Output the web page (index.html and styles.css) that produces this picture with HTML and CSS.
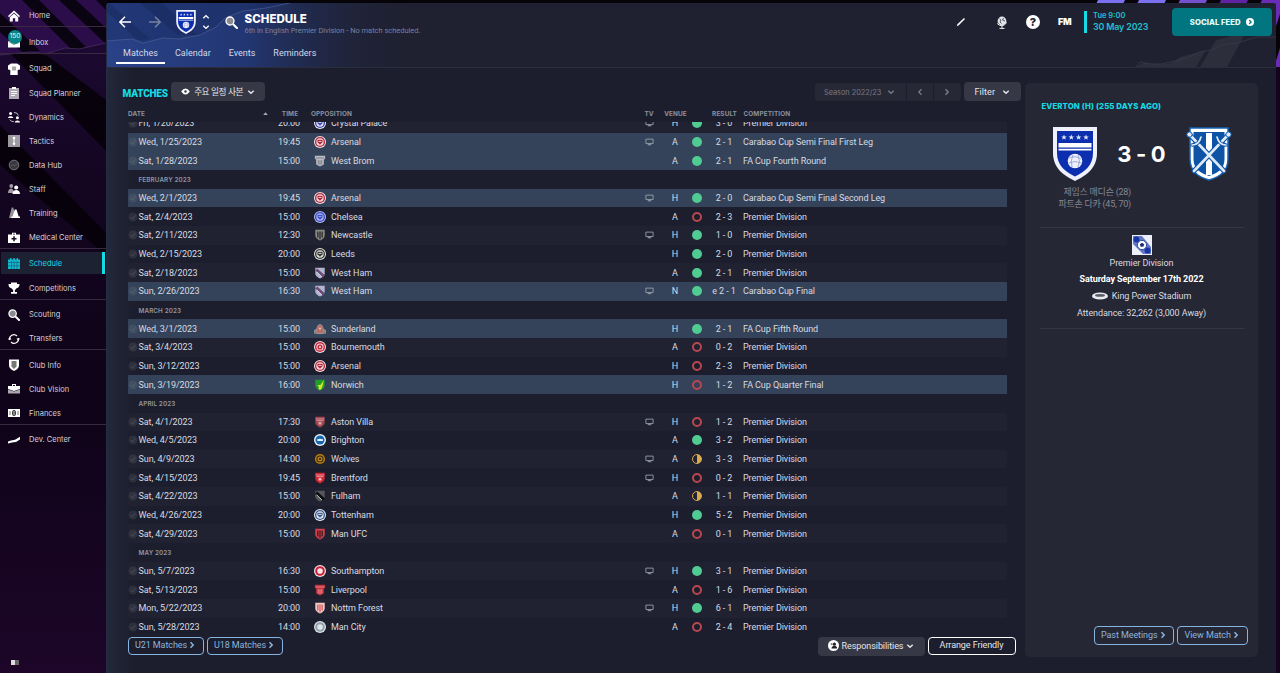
FILE: index.html
```html
<!DOCTYPE html>
<html lang="en">
<head>
    <meta charset="UTF-8">
    <meta name="viewport" content="width=device-width, initial-scale=1.0">
    <title>Schedule - Matches</title>
    <link rel="stylesheet" href="styles.css">
</head>
<body>
    <!-- icon sprite -->
    <svg class="sprite" aria-hidden="true">
        <symbol id="i-home" viewBox="0 0 12 12"><path d="M6 .4 0 6l1 1.200L6 2.600l5 4.600L12 6z"/><path d="M1.800 7.200V11.500h3V8.200h2.400v3.300h3V7.200L6 3.500z"/></symbol>
        <symbol id="i-inbox" viewBox="0 0 12 12"><path d="M0 5h12v6.500H0z"/><path d="M0 5l6 3.600L12 5" fill="none" stroke="#777" stroke-width=".8"/></symbol>
        <symbol id="i-shirt" viewBox="0 0 12 12"><path d="M3 .5h6l3 2V6.500l-2.300.5v5H2.300V7L0 6.500v-4z"/><path d="M5 3.500v4M7 3.500v4" stroke="#555" stroke-width="1"/></symbol>
        <symbol id="i-clip" viewBox="0 0 12 12"><path d="M1 1h10v11H1z" opacity=".65"/><path d="M4 0h4v2H4z"/><path d="M3 4.500h6M3 6.500h6M3 8.500h4" stroke="#fff" stroke-width=".9"/></symbol>
        <symbol id="i-dyn" viewBox="0 0 12 12"><circle cx="2.600" cy="2.500" r="1.500"/><path d="M0 7c0-2.500 5.200-2.500 5.200 0z"/><circle cx="9.400" cy="6.800" r="1.500"/><path d="M6.800 11.500c0-2.700 5.200-2.700 5.200 0z"/><path d="M6 1.500q4 0 4.300 3M1.800 8.500q1 2.300 4 2.200" fill="none" stroke="#bbb" stroke-width="1"/></symbol>
        <symbol id="i-tac" viewBox="0 0 12 12"><path d="M0 0h12v12H0z" opacity=".6"/><circle cx="6" cy="3" r="1.300"/><circle cx="6" cy="8.700" r="1.300"/><path d="M5.500 3h1v6h-1z"/></symbol>
        <symbol id="i-data" viewBox="0 0 12 12"><circle cx="6" cy="6" r="4.800" fill="#3a373e" stroke="#85828a" stroke-width=".8"/><path d="M2.500 7.500l2-2 2 1.500 3-3" fill="none" stroke="#67646c" stroke-width=".7"/></symbol>
        <symbol id="i-staff" viewBox="0 0 12 12"><g opacity=".6"><circle cx="3.300" cy="3" r="1.900"/><path d="M0 10c0-6 6-6 6 0z"/></g><circle cx="8.200" cy="4.500" r="2"/><path d="M4.500 11c0-5.500 7.500-5.500 7.500 0z"/></symbol>
        <symbol id="i-train" viewBox="0 0 12 12"><path d="M3.800.5h1.400L8.500 11H1z" opacity=".55"/><path d="M6.800 2.500h1.700l2.200 7H12V11H3.300V9.500h1.300z"/></symbol>
        <symbol id="i-med" viewBox="0 0 12 12"><path d="M4 2.500V.8h4v1.700h4V11H0V2.500zm1 0h2v-.8H5z"/><path d="M6 4.200v5M3.500 6.700h5" stroke="#150a1e" stroke-width="1.500"/></symbol>
        <symbol id="i-cal" viewBox="0 0 12 12"><path d="M2 0h1.500v1.500H2zM5.300 0h1.500v1.500H5.300zM8.600 0h1.500v1.500H8.600zM0 1.500h12V11H0z"/><path d="M0 4.500h12M0 7.800h12M3.500 3v8M6.200 3v8M9 3v8" stroke="#155a6c" stroke-width=".6"/></symbol>
        <symbol id="i-cup" viewBox="0 0 12 12"><path d="M3 .5h6V2h2.500c0 3-1 3.800-3 4.200C8 7.300 7 7.800 6.900 8v2H9v1.700H3V10h2.100V8C4.900 7.600 4 7.200 3.500 6.200 1.500 5.800.5 5 .5 2H3z"/></symbol>
        <symbol id="i-search" viewBox="0 0 12 12"><circle cx="4.600" cy="4.600" r="3.700" fill="#8a8a8f" stroke="#fff" stroke-width="1.200"/><path d="M8 8l3 3" stroke="#fff" stroke-width="2" stroke-linecap="round"/></symbol>
        <symbol id="i-trans" viewBox="0 0 12 12"><path d="M1.700 7A4.300 4.300 0 0 1 9 3M10.300 5A4.300 4.300 0 0 1 3 9" fill="none" stroke="#fff" stroke-width="1.200"/><path d="M0 6.500h3.500L1.700 4zM12 5.500H8.500L10.300 8z"/></symbol>
        <symbol id="i-shield" viewBox="0 0 12 12"><path d="M1 .5h10v5.300C11 9.500 8.500 11 6 12 3.500 11 1 9.500 1 5.800z"/><path d="M3.500 2h5v5.500L6 10 3.500 7.500z" fill="#777"/></symbol>
        <symbol id="i-case" viewBox="0 0 12 12"><path d="M4 3V1h4v2h4v3L6 8 0 6V3zm1-1v1h2V2z"/><path d="M0 6.500l6 2 6-2v4H0z" opacity=".65"/></symbol>
        <symbol id="i-fin" viewBox="0 0 12 12"><path d="M0 2h12v8H0z"/><path d="M2 4v4M10 4v4" stroke="#777"/><ellipse cx="6" cy="6" rx="2" ry="3" fill="#333"/><path d="M6 4v4" stroke="#fff" stroke-width=".8"/></symbol>
        <symbol id="i-dev" viewBox="0 0 12 12"><path d="M0 7.500l3-1 4-.7 5-3v2.700L8 8l-4 .5L0 9.500z"/></symbol>
        <symbol id="i-down" viewBox="0 0 8 8"><path d="M1.300 2.700 4 5.200l2.700-2.500" fill="none" stroke="currentColor" stroke-width="1.500"/></symbol>
        <symbol id="i-right" viewBox="0 0 8 8"><path d="M2.500 1.200 5.200 4 2.500 6.800" fill="none" stroke="currentColor" stroke-width="1.500"/></symbol>
        <symbol id="i-left" viewBox="0 0 8 8"><path d="M5.500 1.200 2.800 4l2.700 2.800" fill="none" stroke="currentColor" stroke-width="1.300"/></symbol>
        <symbol id="i-tv" viewBox="0 0 10 8"><path d="M1 .8h8v4.900H1z" fill="none" stroke="#a3a8b2" stroke-width=".9"/><path d="M3 6.500h4v1H3z" fill="#a3a8b2"/></symbol>
        <symbol id="i-check" viewBox="0 0 10 10"><circle cx="5" cy="5" r="4.500" fill="#8a8a90" opacity=".17"/><path d="M2.800 5.200l1.600 1.600L7.500 3.300" fill="none" stroke="#8a8a90" stroke-width=".9" opacity=".35"/></symbol>
        <symbol id="crest" viewBox="0 0 44 54">
            <path d="M0 0h44v26c0 16-12 23-22 28C12 49 0 42 0 26z" fill="#eef0fb"/>
            <path d="M4 4h36v22c0 13-9 19-18 23.500C13 45 4 39 4 26z" fill="#0b2fae"/>
            <path d="M5.500 16h33v4.500h-33zM5.500 21.800h33v1.800h-33z" fill="#fff"/>
            <g fill="#dfe4fb"><path id="star" d="M11 7.500l.8 2h2l-1.600 1.300.6 2-1.800-1.200-1.800 1.200.6-2-1.600-1.300h2z"/><use href="#star" x="7.300"/><use href="#star" x="14.600"/><use href="#star" x="22"/></g>
            <circle cx="22" cy="34" r="7.300" fill="#eef0fb"/>
            <path d="M16 31q6-3 12 1M15.500 36q7-3 13 0M19 40q-2-6 1-12M25 40q3-5 0-12" fill="none" stroke="#8a99d8" stroke-width=".8"/>
        </symbol>
    </svg>

    <div class="app">
        <!-- purple stripes behind the panel edges -->
        <svg class="backdrop" viewBox="0 0 200 673">
            <path d="M200 67v606h-6V67z" fill="#16041f"/>
            <path d="M18 0h27l-2 4H16zM59 0h27l-2 4H57z" fill="#7b70f0"/>
            <path d="M100 0h27l-2 4H98z" fill="#7550cd"/>
            <path d="M141 0h27l-2 4h-27z" fill="#5f22a3"/>
            <path d="M182 0h18v14l-6 18V4h-14zM200 48v19h-6z" fill="#6a2bb8"/>
        </svg>

        <aside class="sidebar">
            <svg class="sidebar-art" viewBox="0 0 106 673" preserveAspectRatio="none">
                <defs><linearGradient id="side" x2="0" y2="1"><stop offset="0" stop-color="#1f0a36"/><stop offset=".3" stop-color="#13051f"/><stop offset=".6" stop-color="#0e0318"/><stop offset="1" stop-color="#1d0629"/></linearGradient></defs>
                <path d="M0 0h106v673H0z" fill="url(#side)"/>
                <path d="M0 0h106v43l-27 6-14-1-20 6-15-2-30 3z" fill="#2b0d4a"/>
                <path d="M22 0h17l47 47-7 2-9-1zM0 13v19l22 20 18-1zM59 0h17l30 28v16zM96 0h10v10z" fill="#07020c" opacity=".9"/>
                <path d="M10 53l35 1 61 46v51zM0 125l106 108v22L0 165z" fill="#050108" opacity=".88"/>
                <path d="M0 55l30-3 15 2 20-6 14 1 27-6" fill="none" stroke="#4b3560" stroke-width=".7"/>
            </svg>
            <nav class="menu">
                <div class="menu-group">
                    <a class="item"><svg class="icon"><use href="#i-home"/></svg>Home</a>
                </div>
                <div class="menu-group">
                    <a class="item"><svg class="icon"><use href="#i-inbox"/></svg>Inbox<span class="badge">150</span></a>
                </div>
                <div class="menu-group">
                    <a class="item"><svg class="icon"><use href="#i-shirt"/></svg>Squad</a>
                    <a class="item"><svg class="icon"><use href="#i-clip"/></svg>Squad Planner</a>
                    <a class="item"><svg class="icon"><use href="#i-dyn"/></svg>Dynamics</a>
                    <a class="item"><svg class="icon"><use href="#i-tac"/></svg>Tactics</a>
                    <a class="item"><svg class="icon"><use href="#i-data"/></svg>Data Hub</a>
                    <a class="item"><svg class="icon"><use href="#i-staff"/></svg>Staff</a>
                    <a class="item"><svg class="icon"><use href="#i-train"/></svg>Training</a>
                    <a class="item"><svg class="icon"><use href="#i-med"/></svg>Medical Center</a>
                </div>
                <div class="menu-group">
                    <a class="item active"><svg class="icon"><use href="#i-cal"/></svg>Schedule</a>
                    <a class="item"><svg class="icon"><use href="#i-cup"/></svg>Competitions</a>
                </div>
                <div class="menu-group">
                    <a class="item"><svg class="icon"><use href="#i-search"/></svg>Scouting</a>
                    <a class="item"><svg class="icon"><use href="#i-trans"/></svg>Transfers</a>
                </div>
                <div class="menu-group">
                    <a class="item"><svg class="icon"><use href="#i-shield"/></svg>Club Info</a>
                    <a class="item"><svg class="icon"><use href="#i-case"/></svg>Club Vision</a>
                    <a class="item"><svg class="icon"><use href="#i-fin"/></svg>Finances</a>
                </div>
                <div class="menu-group last">
                    <a class="item"><svg class="icon"><use href="#i-dev"/></svg>Dev. Center</a>
                </div>
            </nav>
            <span class="toggle"></span>
        </aside>

        <div class="panel">
            <header class="topbar">
                <svg class="topbar-art" viewBox="0 0 1170 64">
                    <defs><linearGradient id="blue"><stop offset="0" stop-color="#2b4797"/><stop offset=".45" stop-color="#233a7f"/><stop offset="1" stop-color="#1f2133" stop-opacity="0"/></linearGradient></defs>
                    <path d="M0 0h310v64H0z" fill="url(#blue)" opacity=".85"/>
                    <path d="M0 38l26-2 11 4 20-5 17 1 20-4 16-8 9-9 18-7 23-3 24-5V0H0z" fill="#172a60" opacity=".4"/>
                    <path d="M0 8l32 29 12-1L3 0zM34 0h22l36 32H72z" fill="#14224f" opacity=".35"/>
                    <path d="M0 38l26-2 11 4 20-5 17 1 20-4 16-8 9-9 18-7 23-3 24-5" fill="none" stroke="#4c5e96" stroke-width=".7"/>
                    <path d="M1028 64l12-5 8 2 14 0 10-4-3 7zM1062 64l12-10 20-5 6-2-10 17zM1094 64l16-27 30-8-19 35z" fill="#2d2e3b"/>
                    <path d="M1030 64l4-5 8 2 14 0 25-6 12-6 13-2 10-5 15-2 20-6 19 0" fill="none" stroke="#383a47" stroke-width=".8"/>
                </svg>
                <div class="topbar-main">
                    <svg class="arrow" viewBox="0 0 12 12"><path d="M6 .8.900 6l5.100 5.200M1 6h11" fill="none" stroke="#fff" stroke-width="1.500"/></svg>
                    <svg class="arrow next" viewBox="0 0 12 12"><path d="M6 .8 11.100 6 6 11.200M11 6H0" fill="none" stroke="#77829f" stroke-width="1.500"/></svg>
                    <svg class="club-crest"><use href="#crest"/></svg>
                    <svg class="updown" viewBox="0 0 8 16"><path d="M1.300 4.200 4 1.600l2.700 2.600M1.300 11.800 4 14.400l2.700-2.600" fill="none" stroke="#fff" stroke-width="1.400"/></svg>
                    <svg class="search"><use href="#i-search"/></svg>
                    <div class="title">
                        <h1>SCHEDULE</h1>
                        <p>6th in English Premier Division - No match scheduled.</p>
                    </div>
                    <div class="tools">
                        <svg class="pencil" viewBox="0 0 10 10"><path d="M.8 9.200l.6-2L8 1l1 1-6.200 6.300z" fill="#fff"/></svg>
                        <svg class="globe" viewBox="0 0 12 13"><circle cx="6" cy="5" r="4.400" fill="#e2e3e8"/><path d="M3.500 3l1.500 1-1 2 1.500 1.500M7.500 2l-1 2 2.500 1" stroke="#4a4c5c" stroke-width=".9" fill="none"/><path d="M1.200 7.500Q6 12.500 10.800 6.500M6 10v2.500M3.500 12.400h5" stroke="#eee" fill="none"/></svg>
                        <span class="help">?</span>
                        <span class="fm">FM</span>
                        <div class="date"><span>Tue 9:00</span><strong>30 May 2023</strong></div>
                        <button class="social">SOCIAL FEED <svg viewBox="0 0 8 8"><circle cx="4" cy="4" r="4" fill="#fff"/><path d="M3.200 2 5.200 4l-2 2" fill="none" stroke="#027680" stroke-width="1.200"/></svg></button>
                    </div>
                </div>
                <nav class="tabs">
                    <a class="tab current">Matches</a>
                    <a class="tab">Calendar</a>
                    <a class="tab">Events</a>
                    <a class="tab">Reminders</a>
                </nav>
            </header>

            <div class="content">
                <main class="matches">
                    <div class="toolbar">
                        <h2>MATCHES</h2>
                        <button class="btn view"><svg class="eye" viewBox="0 0 10 8"><path d="M0 4q5-7 10 0-5 7-10 0z" fill="#fff"/><circle cx="5" cy="4" r="1.400" fill="#383a49"/></svg><span>주요 일정 사본</span><svg class="chev"><use href="#i-down"/></svg></button>
                        <div class="season">
                            <span class="season-name">Season 2022/23 <svg class="chev"><use href="#i-down"/></svg></span>
                            <span class="step"><svg class="chev"><use href="#i-left"/></svg></span>
                            <span class="step end"><svg class="chev"><use href="#i-right"/></svg></span>
                        </div>
                        <button class="btn filter">Filter <svg class="chev"><use href="#i-down"/></svg></button>
                    </div>
                    <div class="table-head">
                        <span>DATE</span>
                        <span class="sort"></span>
                        <span class="mid">TIME</span>
                        <span>OPPOSITION</span>
                        <span class="mid">TV</span>
                        <span class="mid">VENUE</span>
                        <span></span>
                        <span class="mid">RESULT</span>
                        <span>COMPETITION</span>
                    </div>
                    <div class="table-wrap">
                        <div class="rows" id="rows"></div>
                        <div class="scrollbar"></div>
                    </div>
                    <div class="actions">
                        <button class="btn-outline">U21 Matches <svg class="chev"><use href="#i-right"/></svg></button>
                        <button class="btn-outline">U18 Matches <svg class="chev"><use href="#i-right"/></svg></button>
                        <button class="btn resp"><svg class="who" viewBox="0 0 12 12"><circle cx="6" cy="6" r="6" fill="#fff"/><circle cx="7" cy="4.500" r="1.700" fill="#222"/><path d="M3.800 9.300c0-4 6.200-4 6.200 0z" fill="#222"/><circle cx="4" cy="4.500" r="1.200" fill="#888"/></svg>Responsibilities <svg class="chev"><use href="#i-down"/></svg></button>
                        <button class="btn-outline white">Arrange Friendly</button>
                    </div>
                </main>

                <section class="card">
                    <h3>EVERTON (H) (255 DAYS AGO)</h3>
                    <div class="score">
                        <svg class="crest-l"><use href="#crest"/></svg>
                        <span>3 - 0</span>
                        <svg class="crest-r" viewBox="0 0 46 54">
                            <path d="M4 1h38v31c0 13-9 18-19 21C13 50 4 45 4 32z" fill="#fff" stroke="#1565b8" stroke-width="1.500"/>
                            <path d="M7.500 5h31v27c0 10-7 14-15.500 17C14.500 46 7.500 42 7.500 32z" fill="#0d53a6"/>
                            <path d="M20 6h6v42h-6z" fill="#fff"/>
                            <g fill="none" stroke-linecap="round"><path d="M4 8l34 36M42 8 8 44" stroke="#0d53a6" stroke-width="5"/><path d="M4 8l34 36M42 8 8 44" stroke="#dfeaf7" stroke-width="2.600"/><path d="M6 18q7 0 9-8M40 18q-7 0-9-8" stroke="#0d53a6" stroke-width="3.500"/><path d="M6 18q7 0 9-8M40 18q-7 0-9-8" stroke="#dfeaf7" stroke-width="1.700"/></g>
                            <g fill="#dfeaf7" stroke="#1565b8"><circle cx="3.500" cy="7.500" r="2.600"/><circle cx="42.500" cy="7.500" r="2.600"/></g>
                        </svg>
                    </div>
                    <div class="scorers">
                        <p>제임스 매디슨 (28)</p>
                        <p>파트손 다카 (45, 70)</p>
                    </div>
                    <div class="info">
                        <svg class="comp" viewBox="0 0 20 20"><path d="M0 0h20v20H0z" fill="#edf0fa"/><path d="M1 1h9l9 11v7h-8L1 9z" fill="#6378c4"/><circle cx="4.500" cy="4.500" r="3" fill="#1736a5"/><circle cx="15.500" cy="15.500" r="3" fill="#1736a5"/><circle cx="10" cy="10" r="4.600" fill="#fff" stroke="#344f9f"/><path d="M10 7.800l2.200 1.500-.9 2.500H8.700l-.9-2.500z" fill="#1d2d70"/></svg>
                        <p class="league">Premier Division</p>
                        <p class="day">Saturday September 17th 2022</p>
                        <p class="ground"><svg viewBox="0 0 16 8"><ellipse cx="8" cy="4" rx="8" ry="3.600" fill="#e9eaee"/><ellipse cx="8" cy="3.400" rx="5" ry="1.300" fill="#5a5d67"/></svg>King Power Stadium</p>
                        <p class="crowd">Attendance: 32,262 (3,000 Away)</p>
                    </div>
                    <div class="card-actions">
                        <button class="btn-outline">Past Meetings <svg class="chev"><use href="#i-right"/></svg></button>
                        <button class="btn-outline">View Match <svg class="chev"><use href="#i-right"/></svg></button>
                    </div>
                </section>
            </div>
        </div>
    </div>

    <script src="script.js"></script>
</body>
</html>
```

FILE: styles.css
```css
:root {
    --cyan: #14dbe4;
    --panel: #1c1e2d;
    --card: #252735;
    --cup: #34435a;
    --text: #d9dbe1;
    --muted: #8d909b;
    --outline: #86b4e0;
    --row: 18.67px;
}

* {
    margin: 0;
    padding: 0;
    box-sizing: border-box;
}

body {
    width: 1280px;
    height: 673px;
    overflow: hidden;
    background: #060309;
    color: var(--text);
    font-family: Roboto, "Noto Sans CJK KR", sans-serif;
    font-size: 9px;
    letter-spacing: -0.08px;
}

button {
    font: inherit;
    letter-spacing: inherit;
    color: inherit;
    border: none;
    background: none;
}

svg {
    display: block;
    flex: none;
}

.sprite {
    position: absolute;
    width: 0;
    height: 0;
}

.app {
    position: relative;
    display: flex;
    height: 673px;
}

.backdrop {
    position: absolute;
    top: 0;
    right: 0;
    width: 200px;
    height: 673px;
}

/* Sidebar */
.sidebar {
    position: relative;
    width: 106px;
    padding-top: 3.4px;
    font-family: Inter, sans-serif;
    font-size: 7.5px;
    letter-spacing: 0;
}

.sidebar-art {
    position: absolute;
    inset: 0;
    width: 106px;
    height: 673px;
}

.menu {
    position: relative;
}

.menu-group {
    margin-bottom: 2.4px;
    box-shadow: 0 -1px 0 #38293f inset;
}

.menu-group.last {
    box-shadow: none;
}

.item {
    position: relative;
    display: flex;
    align-items: center;
    gap: 9px;
    height: 24.1px;
    padding: 1px 0 0 8px;
    color: #d5d2da;
}

.item.active {
    color: var(--cyan);
    background: linear-gradient(#1c2232, #1c2232) 1px 0 / 105px 22px no-repeat;
    border-right: 3px solid var(--cyan);
    border-image: linear-gradient(transparent 4%, var(--cyan) 4% 88%, transparent 88%) 1;
    margin-right: 1px;
    padding-top: 0;
}

.icon {
    width: 12px;
    height: 12px;
    fill: #fff;
}

.active .icon {
    fill: #13b5cf;
}

.badge {
    position: absolute;
    left: 8px;
    top: 0;
    width: 14px;
    height: 14px;
    border-radius: 50%;
    background: #078587;
    color: #e5ffff;
    font-size: 6.5px;
    line-height: 13px;
    text-align: center;
    letter-spacing: 0;
}

.toggle {
    position: absolute;
    left: 11px;
    bottom: 8px;
    width: 8px;
    height: 5px;
    background: linear-gradient(90deg, #ddd 50%, #666 50%);
}

/* Main panel */
.panel {
    position: relative;
    width: 1170px;
    height: 670px;
    margin-top: 3px;
    border-left: 1px solid #252c42;
    border-radius: 3px 3px 0 0;
    background: linear-gradient(90deg, #22293b, transparent 25px), var(--panel);
    overflow: hidden;
}

.topbar {
    position: relative;
    height: 65px;
    background: #1f2131;
    border-bottom: 1px solid #2a2d3b;
}

.topbar-art {
    position: absolute;
    left: -1px;
    top: 0;
    width: 1170px;
    height: 64px;
}

.topbar-main {
    position: relative;
    display: flex;
    align-items: center;
    height: 38px;
    padding-left: 12px;
}

.arrow {
    width: 12px;
    height: 12px;
}

.arrow.next {
    margin-left: 18px;
}

.club-crest {
    width: 20px;
    height: 24px;
    margin-left: 14.5px;
}

.updown {
    width: 8px;
    height: 16px;
    margin-left: 6px;
}

.search {
    width: 13px;
    height: 13px;
    margin-left: 15px;
}

.title {
    margin-left: 7px;
    padding-top: 3px;
}

.title h1 {
    font: 800 11.5px/14px Inter, sans-serif;
    letter-spacing: 0.05px;
    color: #fff;
}

.title p {
    font-size: 7.5px;
    line-height: 10px;
    letter-spacing: -0.03px;
    color: #7a80a0;
}

.tools {
    display: flex;
    align-items: center;
    margin-left: auto;
    padding-right: 4px;
}

.pencil {
    width: 10px;
    height: 10px;
    margin-right: 30px;
}

.globe {
    width: 12px;
    height: 13px;
    margin-right: 18px;
}

.help {
    width: 14px;
    height: 14px;
    border-radius: 50%;
    background: #fff;
    color: #1f2131;
    font: 800 11px/14px Inter, sans-serif;
    text-align: center;
}

.fm {
    width: 14px;
    margin: 0 12px 0 18px;
    color: #fff;
    font: 900 9px/12px Inter, sans-serif;
    letter-spacing: -0.3px;
}

.date {
    display: flex;
    flex-direction: column;
    width: 88px;
    height: 22px;
    padding-left: 6px;
    border-left: 3px solid var(--cyan);
    color: #22bfd0;
    font-family: Inter, sans-serif;
    font-size: 7.5px;
    font-weight: 600;
    line-height: 10px;
    letter-spacing: 0;
}

.date strong {
    font-size: 8.9px;
    font-weight: 600;
    line-height: 12px;
    letter-spacing: -0.15px;
}

.social {
    display: flex;
    align-items: center;
    justify-content: center;
    gap: 5.5px;
    width: 100px;
    height: 28px;
    border-radius: 4px;
    background: #027680;
    color: #e4ffff;
    font: 800 7.7px Inter, sans-serif;
    letter-spacing: 0.05px;
}

.social svg {
    width: 8px;
    height: 8px;
}

.tabs {
    position: relative;
    display: flex;
    height: 23px;
    padding-left: 9px;
}

.tab {
    margin-right: 18px;
    line-height: 24px;
    letter-spacing: 0;
    color: #d3d9ea;
}

.tab.current {
    width: 49px;
    margin-right: 10px;
    border-bottom: 2px solid #fff;
    text-align: center;
}

/* Content */
.content {
    display: flex;
    padding-top: 14px;
}

.matches {
    width: 903px;
    margin-right: 15px;
    padding-left: 15.5px;
}

.toolbar {
    display: flex;
    align-items: flex-start;
    width: 898px;
    height: 24px;
}

.toolbar h2 {
    width: 48.5px;
    color: var(--cyan);
    font: 900 10px/23px Roboto, sans-serif;
    letter-spacing: -0.2px;
}

.chev {
    width: 8px;
    height: 8px;
}

.btn {
    display: flex;
    align-items: center;
    justify-content: center;
    height: 19px;
    border-radius: 4px;
    background: #363845;
    color: #e4e5ea;
}

.view {
    gap: 4px;
    width: 94px;
}

.view span {
    font-size: 8.7px;
    letter-spacing: -0.6px;
    word-spacing: 0.6px;
}

.eye {
    width: 9px;
    height: 7px;
}

.season {
    display: flex;
    width: 146px;
    height: 18px;
    margin: 1px 3px 0 auto;
    border-radius: 4px;
    background: #262836;
    color: #777a86;
}

.season-name {
    display: flex;
    align-items: center;
    gap: 6px;
    width: 91px;
    padding-left: 9px;
    font: 7.4px Inter, sans-serif;
    letter-spacing: -0.05px;
}

.step {
    display: flex;
    align-items: center;
    justify-content: center;
    width: 27px;
    border-left: 1px solid #1c1e2d;
}

.filter {
    gap: 7px;
    width: 56.5px;
    letter-spacing: 0.1px;
}

.table-head,
.row {
    display: grid;
    grid-template-columns: 11px 129.5px 42px 21px 305px 26px 26px 17px 38px 1fr;
    align-items: center;
    width: 879px;
}

.table-head {
    grid-template-columns: 134px 7px 42px 325px 26px 27px 16.5px 38px 1fr;
    height: 15.5px;
    margin-left: 5.5px;
    color: var(--muted);
    font: 700 6.4px Inter, sans-serif;
    letter-spacing: 0.1px;
}

.mid {
    text-align: center;
}

.sort {
    width: 5px;
    height: 3px;
    margin-left: 1px;
    background: #a9abb4;
    clip-path: polygon(50% 0, 100% 100%, 0 100%);
}

.table-wrap {
    display: flex;
    align-items: flex-end;
    height: 515px;
    padding-left: 5px;
    overflow: hidden;
}

.rows {
    flex: none;
    height: 515px;
    margin-right: 4px;
    overflow: hidden;
}

.row {
    height: var(--row);
    border-radius: 2px;
    white-space: nowrap;
}

.row:first-child {
    margin-top: -7.5px;
}

.row:nth-child(odd) {
    background: #202231;
}

.row.cup {
    background: var(--cup);
    border-radius: 0;
}

.row.month {
    display: block;
    padding-left: 11px;
    background: none;
    color: #9395a0;
    font: 600 6.3px/20.5px Inter, sans-serif;
    letter-spacing: 0.12px;
}

.check {
    width: 10px;
    height: 10px;
}

.crest {
    width: 12px;
    height: 12px;
    margin-left: 3.5px;
}

.tv {
    width: 9px;
    height: 8px;
    margin: 0 auto;
}

.dot {
    width: 10px;
    height: 10px;
    margin-left: 3.5px;
    border-radius: 50%;
}

.dot.win {
    background: #50cb91;
}

.dot.loss {
    border: 2px solid #b9474f;
}

.dot.draw {
    border: 1.5px solid #d9a94f;
    background: linear-gradient(90deg, transparent 50%, #d9a94f 50%);
}

.scrollbar {
    flex: none;
    width: 2.5px;
    height: 207px;
    border-radius: 2px;
    background: #50535e;
}

.actions {
    display: flex;
    width: 893px;
    gap: 3px;
    padding-left: 5px;
}

.btn-outline {
    display: flex;
    align-items: center;
    justify-content: center;
    gap: 1px;
    width: 76px;
    height: 18.5px;
    padding-bottom: 1px;
    border: 1.5px solid var(--outline);
    border-radius: 4px;
    color: #8db4dc;
}

.btn-outline.white {
    width: 88px;
    border-color: #fff;
    color: #e4e5ea;
}

.resp {
    gap: 3px;
    width: 107px;
    margin-left: auto;
    padding-bottom: 1px;
}

.who {
    width: 11px;
    height: 11px;
}

/* Match card */
.card {
    display: flex;
    flex-direction: column;
    width: 233px;
    height: 574px;
    margin-top: 1px;
    padding: 16px 14.5px 12.5px;
    border-radius: 5px;
    background: var(--card);
}

.card h3 {
    padding-left: 2px;
    color: var(--cyan);
    font: 800 7.8px/14px Inter, sans-serif;
    letter-spacing: 0.1px;
    white-space: nowrap;
}

.score {
    display: flex;
    align-items: center;
    justify-content: space-between;
    padding: 14px 12px 0 13.5px;
}

.score span {
    color: #fff;
    font: 700 22px/27px Inter, sans-serif;
    letter-spacing: -0.3px;
}

.crest-l {
    width: 44px;
    height: 54px;
}

.crest-r {
    width: 46px;
    height: 54px;
}

.scorers {
    width: 91.5px;
    height: 46px;
    padding-top: 5px;
    color: #858893;
    letter-spacing: -0.25px;
    line-height: 12px;
    text-align: right;
    white-space: nowrap;
}

.info {
    display: flex;
    flex-direction: column;
    align-items: center;
    height: 102px;
    padding-top: 7px;
    border-top: 1px solid #343744;
    border-bottom: 1px solid #343744;
}

.comp {
    width: 20px;
    height: 20px;
}

.league {
    line-height: 17px;
}

.day {
    color: #fff;
    font-weight: 700;
    line-height: 14px;
}

.ground {
    display: flex;
    align-items: center;
    gap: 4px;
    line-height: 20px;
}

.ground svg {
    width: 16px;
    height: 8px;
}

.crowd {
    line-height: 14px;
}

.card-actions {
    display: flex;
    justify-content: flex-end;
    gap: 3px;
    margin-top: auto;
    margin-right: -4px;
}

.card-actions .btn-outline {
    width: 80.5px;
}

.card-actions .btn-outline:last-child {
    width: 70.5px;
}
```

FILE: script.js
```js
// [kind, main colour, second colour]
const crests = {
    'Crystal Palace': ['ring', '#4149a8', '#e6e6f5'],
    'Arsenal': ['ring', '#b3263b', '#f5e3e5'],
    'West Brom': ['banner', '#b9bac3', '#6c6d76'],
    'Chelsea': ['ring', '#3a4bc0', '#aeb9f5'],
    'Newcastle': ['stripes', '#8a8a84', '#191919'],
    'Leeds': ['ring', '#34373d', '#e2e0d6'],
    'West Ham': ['slash', '#b5b4cf', '#6a4f7a'],
    'Sunderland': ['hill', '#c06b5d', '#8a8f99'],
    'Bournemouth': ['target', '#c3283e', '#f5dfe2'],
    'Norwich': ['bird', '#1f9e2c', '#d5e82a'],
    'Aston Villa': ['shield', '#a04550', '#d9a9af'],
    'Brighton': ['ball', '#1766b0', '#e7f1fa'],
    'Wolves': ['target', '#b9811c', '#2d230f'],
    'Brentford': ['shield', '#cf2632', '#f3b9bd'],
    'Fulham': ['slash', '#55575a', '#0c0d0f'],
    'Tottenham': ['ring', '#3b5686', '#e9eef6'],
    'Man UFC': ['stripes', '#d6404c', '#241216'],
    'Southampton': ['spot', '#c81f37', '#f5e6e8'],
    'Liverpool': ['banner', '#c3323d', '#f0a0a4'],
    'Nottm Forest': ['stripes', '#f0c8c8', '#cf4a4e'],
    'Man City': ['spot', '#8fa0a8', '#dfe4ea']
};

// month heading, or [date, time, opposition, tv, venue, outcome, result, competition, cup tie]
const league = 'Premier Division';
const matches = [
    ['Fri, 1/20/2023', '20:00', 'Crystal Palace', 1, 'H', 'win', '3 - 0', league],
    ['Wed, 1/25/2023', '19:45', 'Arsenal', 1, 'A', 'win', '2 - 1', 'Carabao Cup Semi Final First Leg', 1],
    ['Sat, 1/28/2023', '15:00', 'West Brom', 0, 'A', 'win', '2 - 1', 'FA Cup Fourth Round', 1],
    'FEBRUARY 2023',
    ['Wed, 2/1/2023', '19:45', 'Arsenal', 1, 'H', 'win', '2 - 0', 'Carabao Cup Semi Final Second Leg', 1],
    ['Sat, 2/4/2023', '15:00', 'Chelsea', 0, 'A', 'loss', '2 - 3', league],
    ['Sat, 2/11/2023', '12:30', 'Newcastle', 1, 'H', 'win', '1 - 0', league],
    ['Wed, 2/15/2023', '20:00', 'Leeds', 0, 'H', 'win', '2 - 0', league],
    ['Sat, 2/18/2023', '15:00', 'West Ham', 0, 'A', 'win', '2 - 1', league],
    ['Sun, 2/26/2023', '16:30', 'West Ham', 1, 'N', 'win', 'e 2 - 1', 'Carabao Cup Final', 1],
    'MARCH 2023',
    ['Wed, 3/1/2023', '15:00', 'Sunderland', 0, 'H', 'win', '2 - 1', 'FA Cup Fifth Round', 1],
    ['Sat, 3/4/2023', '15:00', 'Bournemouth', 0, 'A', 'loss', '0 - 2', league],
    ['Sun, 3/12/2023', '15:00', 'Arsenal', 0, 'H', 'loss', '2 - 3', league],
    ['Sun, 3/19/2023', '16:00', 'Norwich', 0, 'H', 'loss', '1 - 2', 'FA Cup Quarter Final', 1],
    'APRIL 2023',
    ['Sat, 4/1/2023', '17:30', 'Aston Villa', 1, 'H', 'loss', '1 - 2', league],
    ['Wed, 4/5/2023', '20:00', 'Brighton', 0, 'A', 'win', '3 - 2', league],
    ['Sun, 4/9/2023', '14:00', 'Wolves', 1, 'A', 'draw', '3 - 3', league],
    ['Sat, 4/15/2023', '19:45', 'Brentford', 1, 'H', 'loss', '0 - 2', league],
    ['Sat, 4/22/2023', '15:00', 'Fulham', 0, 'A', 'draw', '1 - 1', league],
    ['Wed, 4/26/2023', '20:00', 'Tottenham', 0, 'H', 'win', '5 - 2', league],
    ['Sat, 4/29/2023', '15:00', 'Man UFC', 0, 'A', 'loss', '0 - 1', league],
    'MAY 2023',
    ['Sun, 5/7/2023', '16:30', 'Southampton', 1, 'H', 'win', '3 - 1', league],
    ['Sat, 5/13/2023', '15:00', 'Liverpool', 0, 'A', 'loss', '1 - 6', league],
    ['Mon, 5/22/2023', '20:00', 'Nottm Forest', 1, 'H', 'win', '6 - 1', league],
    ['Sun, 5/28/2023', '14:00', 'Man City', 0, 'A', 'loss', '2 - 4', league]
];

const shieldPath = 'M1.500 1h11v6.500c0 3-3 4.700-5.500 6-2.500-1.300-5.500-3-5.500-6z';

function crest(team) {
    const [kind, a, b] = crests[team];
    const shapes = {
        ring: `<circle cx="7" cy="7" r="7" fill="${b}"/><circle cx="7" cy="7" r="5.900" fill="${a}"/><circle cx="7" cy="7" r="4.300" fill="${b}"/><path d="M4 4.300h6v3L7 10.300 4 7.300z" fill="${a}"/><path d="M5.200 6.300h3.600" stroke="${b}" stroke-width="1.100"/>`,
        target: `<circle cx="7" cy="7" r="7" fill="${b}"/><circle cx="7" cy="7" r="5.900" fill="${a}"/><circle cx="7" cy="7" r="4.200" fill="${b}"/><circle cx="7" cy="7" r="3" fill="${a}"/><circle cx="7" cy="7" r="1.300" fill="${b}"/>`,
        spot: `<circle cx="7" cy="7" r="7" fill="${b}"/><circle cx="7" cy="7" r="5.600" fill="${a}"/><circle cx="7" cy="7" r="3.300" fill="${b}"/>`,
        ball: `<circle cx="7" cy="7" r="7" fill="${b}"/><circle cx="7" cy="7" r="5.300" fill="${a}"/><path d="M3.500 6.500l3-1 4 .7v2H4z" fill="${b}"/>`,
        shield: `<path d="${shieldPath}" fill="${a}"/><path d="M2 3.500h10M3 5.500h8" stroke="${b}" stroke-width=".9"/><circle cx="7" cy="8.500" r="1.800" fill="${b}"/>`,
        stripes: `<path d="${shieldPath}" fill="${a}"/><path d="M4.500 3v7M7 3v9M9.500 3v7" stroke="${b}" stroke-width="1.300"/>`,
        slash: `<path d="${shieldPath}" fill="${a}"/><path d="M2.500 3l9 8" stroke="${b}" stroke-width="3.500"/><path d="M3 5.500l6 6" stroke="#e8e8ea" stroke-width="1"/>`,
        bird: `<path d="${shieldPath}" fill="${a}"/><path d="M11.500 1.500L7.500 7H4l1.500 2v3.500l3-.5L10 8z" fill="${b}"/>`,
        banner: `<path d="M1 1h12v4h-1.500v6L7 13.500 2.500 11V5H1z" fill="${a}"/><path d="M2 3.500h10M5 6v5M7 6v6M9 6v5" stroke="${b}" stroke-width=".9"/>`,
        hill: `<path d="M-1 12q0-4 3.500-5l1.500-4 3-2 3 2 1.500 4q3.500 1 3.500 5-8 2.500-16 0z" fill="${b}"/><path d="M4 11V5l3-3 3 3v6z" fill="${a}"/><path d="M1 10.500h12" stroke="${a}" stroke-width="1.300"/><circle cx="7" cy="6.500" r="1.300" fill="#e9c3bb"/>`
    };
    return `<svg class="crest" viewBox="0 0 14 14">${shapes[kind]}</svg>`;
}

document.getElementById('rows').innerHTML = matches.map(function(m) {
    if (typeof m === 'string') {
        return `<div class="row month">${m}</div>`;
    }
    const [date, time, team, tv, venue, outcome, result, comp, cup] = m;
    return `<div class="row${cup ? ' cup' : ''}">
        <svg class="check"><use href="#i-check"/></svg>
        <span>${date}</span>
        <span class="mid">${time}</span>
        ${crest(team)}
        <span>${team}</span>
        <span>${tv ? '<svg class="tv"><use href="#i-tv"/></svg>' : ''}</span>
        <span class="mid">${venue}</span>
        <span class="dot ${outcome}"></span>
        <span class="mid">${result}</span>
        <span>${comp}</span>
    </div>`;
}).join('');
```
